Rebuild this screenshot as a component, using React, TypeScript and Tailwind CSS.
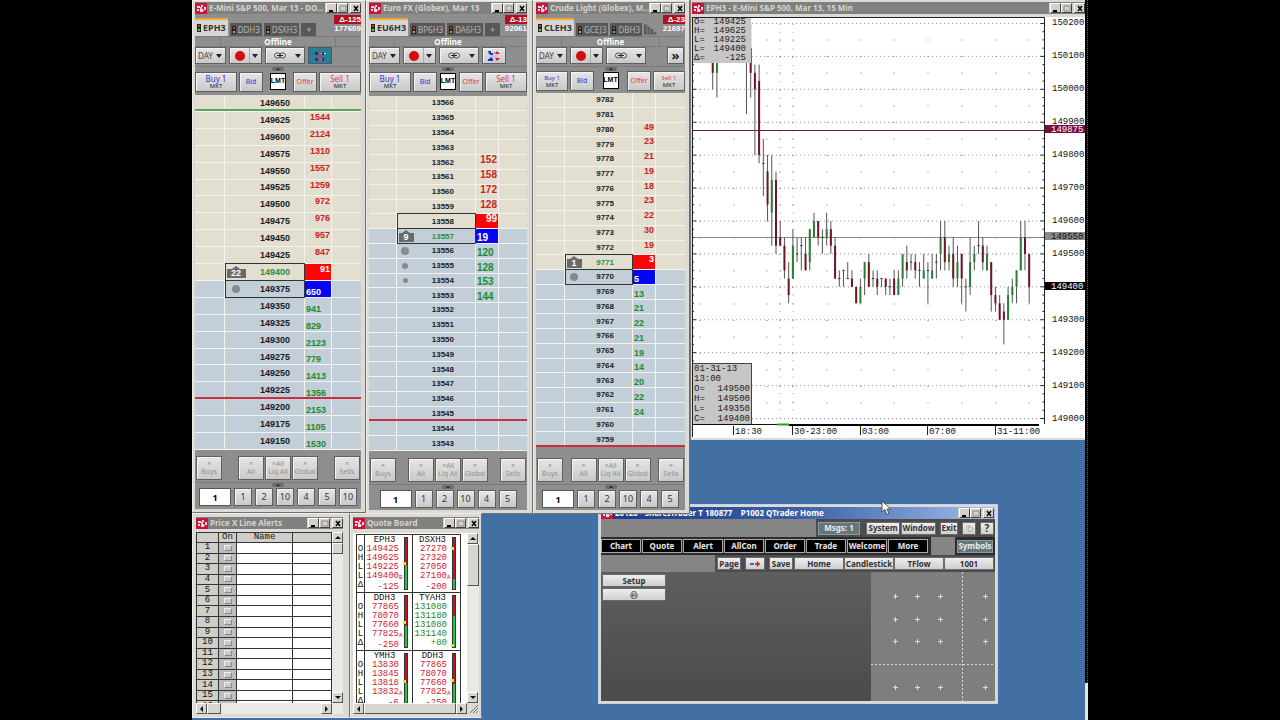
import React from "react";
import { Printer, Copy } from "lucide-react";

type Candle = [high: number, low: number, open: number, close: number];

type Side = "ask" | "bid";

interface LadderRow {
  price: string;
  qty?: string;
  marker?: "count" | "big" | "medium" | "small";
  count?: string;
  boxed?: boolean;
  last?: boolean;
  side: Side;
}

interface LadderProps {
  title: string;
  place: string;
  tabs: string[];
  extraTab: "plus" | "fade";
  change: string;
  volume: string;
  tool: "grid" | "arrows" | "more";
  narrow?: boolean;
  orderRow: string;
  cols: string;
  pricePad: string;
  priceText: string;
  qtyText: string;
  bodyHeight: string;
  footer: string;
  rows: LadderRow[];
  highLine?: string;
  lowLine: string;
  sizes: string[];
}

const uiFont = "font-['Noto_Sans','Open_Sans',sans-serif]";
const dataFont = "font-['Liberation_Sans',Arial,sans-serif]";
const monoFont = "font-['Liberation_Mono','Courier_New',monospace]";

const face = "border border-[#5f5f5f] bg-linear-to-b from-[#e6e6e6] to-[#c9c9c9] shadow-[inset_1px_1px_0_#f4f4f4]";

function Logo() {
  return (
    <svg viewBox="0 0 12 11" className="h-[11px] w-3 shrink-0">
      <rect width="12" height="11" fill="#c9143c" />
      <path d="M2 3h3v2H2zM6 2h2v2H6zM2 6h2v2H2zM5 6h3v3H5zM9 4h2v3H9z" fill="#fff" opacity="0.85" />
      <path d="M5 4h2v2H5zM8 7h1v1H8z" fill="#ffb8c4" />
    </svg>
  );
}

function CaptionButtons() {
  const cls = "flex h-[10px] w-[11px] items-center justify-center border border-t-white border-l-white border-r-[#404040] border-b-[#404040] bg-[#d4d0c8]";
  return (
    <div className="flex shrink-0 bg-[#d4d0c8] pl-px">
      <button className={cls} aria-label="Minimize">
        <svg viewBox="0 0 8 7" className="h-[7px] w-2"><path d="M1 6h4" stroke="#000" strokeWidth="2" /></svg>
      </button>
      <button className={cls} aria-label="Maximize">
        <svg viewBox="0 0 8 7" className="h-[7px] w-2"><path d="M1 1h6v5H1z" fill="none" stroke="#8b8b86" /></svg>
      </button>
      <button className={cls + " ml-0.5"} aria-label="Close">
        <svg viewBox="0 0 8 7" className="h-[7px] w-2"><path d="M2 1l4 5M6 1L2 6" stroke="#000" strokeWidth="1.4" /></svg>
      </button>
    </div>
  );
}

function TitleBar({ title, active = false }: { title: string; active?: boolean }) {
  return (
    <header
      className={
        active
          ? "flex h-3 items-center bg-linear-to-r from-[#1c3a86] via-[#3a5fa8] to-[#a3c0ea] pr-px text-white"
          : "flex h-3 items-center bg-[#808080] text-[#d6d3cc]"
      }
    >
      <Logo />
      <h2 className="min-w-0 flex-1 pl-0.5 text-[8px] leading-3 font-bold whitespace-pre">{title}</h2>
      <CaptionButtons />
    </header>
  );
}

function Light({ on }: { on: boolean }) {
  return (
    <svg viewBox="0 0 4 8" className="h-2 w-1 shrink-0">
      <rect width="4" height="8" fill="#1d1d1d" />
      <circle cx="2" cy="2" r="1.3" fill="#d62b2b" />
      <circle cx="2" cy="6" r="1.3" fill={on ? "#3ed43e" : "#c9a23a"} />
    </svg>
  );
}

function Caret() {
  return (
    <svg viewBox="0 0 6 4" className="h-1 w-1.5 shrink-0"><path d="M0 0h6L3 4z" fill="#222" /></svg>
  );
}

function Grip() {
  return (
    <div className="flex h-1 items-center justify-center border-t border-[#7a7a7a]">
      <svg viewBox="0 0 12 4" className="h-1 w-3"><rect width="12" height="4" rx="2" fill="#6b6b6b" /><path d="M4 3l2-2 2 2z" fill="#222" /></svg>
    </div>
  );
}

function Marker({ row }: { row: LadderRow }) {
  if (row.marker === "count") {
    return (
      <span className={"relative mt-[3px] flex h-[9px] items-center justify-center bg-[#6a6a6a] px-0.5 text-[9px] leading-[9px] text-white " + (row.count!.length > 1 ? "min-w-[19px]" : "min-w-[15px]")}>
        <svg viewBox="0 0 8 3" className="absolute -top-[3px] h-[3px] w-2"><path d="M0 3l4-3 4 3z" fill="#6a6a6a" /></svg>
        {row.count}
      </span>
    );
  }
  if (row.marker === "big") return <span className="size-2 rounded-full bg-[#8a8a8a]" />;
  if (row.marker === "medium") return <span className="size-1.5 rounded-full bg-[#8a8a8a]" />;
  if (row.marker === "small") return <span className="size-[5px] rounded-full bg-[#8a8a8a]" />;
  return null;
}

function qtyClass(row: LadderRow) {
  if (row.boxed && row.side === "ask") return "items-start justify-end bg-[#fb0505] text-white";
  if (row.boxed) return "items-end justify-start bg-[#0505f5] text-white";
  if (row.side === "ask") return "items-start justify-end text-[#cc2222]";
  return "items-end justify-start text-[#1d8a2b]";
}

function LadderWindow(p: LadderProps) {
  return (
    <section className={"absolute flex flex-col border border-[#efede8] border-r-[#707070] border-b-[#707070] bg-[#dcdad5] pt-px pb-[3px] pl-0.5 " + p.place}>
      <TitleBar title={p.title} />
      <div className="flex flex-col bg-[#8e8e8e]">
        <div className="mt-px flex h-[21px] items-end gap-0.5">
          {p.tabs.map((tab, i) => (
            <button
              key={tab}
              className={
                i === 0
                  ? "flex h-[18px] items-center gap-0.5 border-t-2 border-[#f0a830] bg-[#d6d6d6] px-0.5 text-[9px] font-bold text-[#333]"
                  : "flex h-[13px] items-center gap-0.5 bg-[#585858] px-0.5 text-[8px] text-[#b5b5b5]"
              }
            >
              <Light on={i !== 1} />
              {tab}
            </button>
          ))}
          {p.extraTab === "plus" ? (
            <button className="h-[13px] w-[15px] bg-[#585858] text-[9px] leading-3 text-[#c4c4c4]">+</button>
          ) : (
            <svg viewBox="0 0 18 13" className="h-[13px] w-[14px]"><path d="M0 0h4v3h4v3h4v4h4v3H0z" fill="#5c5c5c" /><path d="M4 2v11M8 5v8M12 8v5" stroke="#858585" /></svg>
          )}
          <div className={"ml-auto self-start text-right text-[8px] leading-[9px] font-bold text-white " + dataFont}>
            <div className="bg-[#b01020]">{p.change}</div>
            <div>{p.volume}</div>
          </div>
        </div>
        <div className="flex h-[11px] border-y border-[#7c7c7c]">
          <span className="w-[26px] border-r border-[#7c7c7c]" />
          <span className="flex-1 text-center text-[8px] leading-[9px] font-bold text-white">Offline</span>
          <span className="w-[26px] border-l border-[#7c7c7c]" />
        </div>
        <div className="flex gap-[3px] pr-px">
          <button className={"flex h-[17px] w-[31px] items-center justify-between pr-[3px] pl-0.5 text-[8px] text-[#444] " + face}>DAY <Caret /></button>
          <button className={"flex h-[17px] w-[33px] items-center justify-between pr-[3px] pl-[5px] " + face} aria-label="Record">
            <span className="size-2.5 rounded-full bg-[#d40c0c]" /><span className="-mr-px h-full border-l border-[#aaa]" /><Caret />
          </button>
          <button className={"flex h-[17px] w-10 items-center justify-between pr-[3px] pl-2 " + face} aria-label="Link">
            <svg viewBox="0 0 12 7" className="h-[7px] w-3">
              <g fill="none" stroke="#555"><rect x="0.5" y="1" width="6" height="5" rx="2.5" /><rect x="5.5" y="1" width="6" height="5" rx="2.5" /></g>
              <path d="M3 3.5h6" stroke="#222" />
            </svg>
            <Caret />
          </button>
          {p.tool === "grid" && (
            <button className="flex h-[17px] w-6 items-center justify-center border border-[#3f5f66] bg-[#2c7f93]" aria-label="Layout">
              <svg viewBox="0 0 14 12" className="h-3 w-3.5">
                <path d="M2 2h3v3H2zM2 8h3v3H2zM9 2h2v3H9zM9 8h2v3H9z" fill="#1532b8" />
                <path d="M5 2h3v3H5zM5 8h3v3H5z" fill="#d43c4a" />
                <path d="M8 3h1v1H8zM11 3h2v1h-2zM8 9h1v1H8z" fill="#dbe9ef" />
              </svg>
            </button>
          )}
          {p.tool === "arrows" && (
            <button className={"flex h-[17px] w-6 items-center justify-center " + face} aria-label="Center">
              <svg viewBox="0 0 12 12" className="size-3">
                <path d="M0 1h3v2h2v2H3L1 4zM0 11V9h1l2-2 2 2v2z" fill="#1a34c8" />
                <path d="M7 4l2-3 3 3zM7 8h5l-3 3zM6 2h1v1H6z" fill="#d02030" />
                <path d="M3 5h7v2H3z" fill="#c4c4d0" />
              </svg>
            </button>
          )}
          {p.tool === "more" && (
            <button className={"ml-auto h-[17px] w-[17px] text-[13px] leading-[13px] font-bold text-[#222] " + face}>»</button>
          )}
        </div>
        <div className="pt-0.5"><Grip /></div>
        <div className={"flex gap-0.5 " + p.orderRow}>
          <button className={(p.narrow ? "h-5 w-8 " : "h-5 w-[42px] ") + "leading-[8px] text-[#3434d8] " + face}>
            Buy 1<div className="text-[6px] leading-[6px] text-[#222]">MKT</div>
          </button>
          <button className={"h-5 w-6 text-[7px] text-[#3434d8] " + face}>Bid</button>
          <button className="mx-auto my-px flex h-[17px] w-4 items-center justify-center border border-black bg-white text-[7px] font-bold text-black">
            <span className="font-['Liberation_Sans',Arial,sans-serif]">LMT</span>
          </button>
          <button className={"flex h-5 w-6 items-center justify-center text-[7px] text-[#e03c44] " + face}>Offer</button>
          <button className={(p.narrow ? "h-5 w-8 " : "h-5 w-[42px] ") + "leading-[8px] text-[#e03c44] " + face}>
            Sell 1<div className="text-[6px] leading-[6px] text-[#222]">MKT</div>
          </button>
        </div>
      </div>

      <div className={"relative grid auto-rows-fr font-bold " + dataFont + " " + p.bodyHeight}>
        {p.rows.map((row) => (
          <div
            key={row.price}
            className={"grid min-h-0 border-b border-[#f3f2ec] " + p.cols + (row.side === "ask" ? " bg-[#e3dfd0]" : " bg-[#c2ced8]")}
          >
            <span className="border-r border-[#f3f2ec]" />
            <span
              className={
                "flex min-h-0 items-center justify-between border-r " +
                p.pricePad + " " + p.priceText +
                (row.boxed ? " -my-px border border-[#333]" : " border-[#f3f2ec]")
              }
            >
              <span className="flex w-4 justify-center"><Marker row={row} /></span>
              <span className={row.last ? "text-[#2e8f2e]" : "text-[#1c1c1c]"}>{row.price}</span>
            </span>
            <span className={"flex min-h-0 border-r border-[#f3f2ec] px-px " + p.qtyText + " " + qtyClass(row)}>{row.qty}</span>
            <span />
          </div>
        ))}
        {p.highLine && <div className={"absolute inset-x-0 h-0.5 bg-[#5aa65c] " + p.highLine} />}
        <div className={"absolute inset-x-0 h-0.5 bg-[#cc3040] " + p.lowLine} />
      </div>

      <div className={"flex flex-1 flex-col bg-[#8e8e8e] " + p.footer}>
        <div className="flex justify-between px-px text-[7px] leading-[8px] text-[#909090]">
          <button className={"h-6 w-[26px] " + face}><div>×</div>Buys</button>
          <div className="flex gap-px">
            <button className={"h-6 w-[26px] " + face}><div>×</div>All</button>
            <button className={"h-6 w-[26px] " + face}><div>×All</div>Liq All</button>
            <button className={"h-6 w-[26px] " + face}><div>×</div><span className="flex justify-center">Global</span></button>
          </div>
          <button className={"h-6 w-[26px] " + face}><div>×</div>Sells</button>
        </div>
        <div className="py-0.5"><Grip /></div>
        <div className="flex justify-center gap-[3px] text-[9px] text-[#333]">
          <input
            aria-label="Order size"
            defaultValue="1"
            className="h-[18px] w-8 border border-[#555] bg-white text-center font-bold text-black"
          />
          {p.sizes.map((size, i) => (
            <button key={i} className={"flex h-[18px] w-[18px] items-center justify-center " + face}>{size}</button>
          ))}
        </div>
      </div>
    </section>
  );
}

// Builds rows counting down from `top`; quantities run downwards from row `firstQty`.
function buildRows(
  top: number,
  step: number,
  count: number,
  lowestAsk: number,
  firstQty: number,
  qtys: string[],
  lastPrice: number,
  extra: Record<number, Partial<LadderRow>>
): LadderRow[] {
  return Array.from({ length: count }, (_, i) => {
    const price = top - i * step;
    const side: Side = price >= lowestAsk ? "ask" : "bid";
    return { price: String(price), qty: qtys[i - firstQty], side, last: price === lastPrice, ...extra[price] };
  });
}

const esRows = buildRows(
  149650, 25, 21, 149400, 1,
  ["1544", "2124", "1310", "1557", "1259", "972", "976", "957", "847", "91", "650", "941", "829", "2123", "779", "1413", "1356", "2153", "1105", "1530"],
  149400,
  { 149400: { marker: "count", count: "22", boxed: true }, 149375: { marker: "big", boxed: true } }
);

const euroRows = buildRows(
  13566, 1, 24, 13558, 4,
  ["152", "158", "172", "128", "99", "19", "120", "128", "153", "144"],
  13557,
  {
    13558: { boxed: true },
    13557: { marker: "count", count: "9", boxed: true },
    13556: { marker: "big" },
    13555: { marker: "medium" },
    13554: { marker: "small" },
  }
);

const crudeRows = buildRows(
  9782, 1, 24, 9771, 2,
  ["49", "23", "21", "19", "18", "23", "22", "30", "19", "3", "5", "13", "21", "22", "21", "19", "14", "20", "22", "24"],
  9771,
  { 9771: { marker: "count", count: "1", boxed: true }, 9770: { marker: "big", boxed: true } }
);

// Prices in quarter-point ticks above 149000.
const candles: (Candle | null)[] = [
  [46, 40, 45, 42], [46, 39, 42, 45], null, null, null, null, null, null,
  [46, 37, 45, 45], [48, 39, 45, 42], [43, 32, 42, 40], [43, 31, 41, 32], [34, 27, 31, 31],
  [32, 24, 30, 26], [32, 21, 25, 29], [30, 20, 29, 21], [24, 21, 22, 21], [22, 17, 21, 18],
  [19, 14, 17, 15], [23, 17, 17, 21], [22, 19, 20, 20], [22, 18, 21, 21], [22, 18, 20, 18],
  [23, 18, 19, 23], [25, 22, 22, 24], [24, 21, 24, 22], [23, 20, 22, 22], [25, 21, 22, 23],
  [24, 20, 23, 21], [22, 17, 21, 17], [18, 16, 17, 17], [18, 16, 18, 18], [19, 17, 17, 17],
  [18, 16, 17, 16], [16, 14, 16, 14], [17, 14, 14, 16], [19, 15, 17, 19], [20, 16, 19, 16],
  [18, 16, 17, 17], [18, 15, 17, 16], [17, 16, 17, 17], [17, 15, 17, 16], [17, 15, 16, 16],
  [18, 15, 17, 15], [18, 15, 15, 17], [20, 16, 17, 20], [21, 17, 19, 18], [20, 18, 19, 19],
  [20, 17, 19, 18], [19, 16, 18, 18], [20, 17, 17, 18], [19, 14, 18, 18], [20, 17, 17, 18],
  [20, 17, 19, 19], [24, 18, 20, 22], [24, 18, 22, 19], [21, 18, 19, 20], [22, 16, 20, 17],
  [21, 16, 17, 19], [20, 14, 20, 17], [17, 13, 16, 16], [22, 15, 16, 19], [21, 18, 19, 20],
  [24, 20, 21, 21], [22, 18, 21, 19], [21, 18, 18, 20], [19, 13, 19, 15], [16, 13, 15, 14],
  [15, 12, 14, 12], [14, 9, 13, 12], [16, 12, 12, 15], [17, 14, 15, 16], [18, 14, 16, 18],
  [24, 18, 18, 22], [24, 18, 22, 20], [20, 14, 20, 16],
];

const tickY = (t: number) => 418.5 - t * 8.23;
const barX = (i: number) => 712.7 + i * 4.22;

const priceLabels = Array.from({ length: 13 }, (_, i) => 150200 - i * 100);
const gridColumns = [700, 734, 767, 780, 793, 827, 861, 894, 928, 962, 996, 1029];
const timeLabels: [number, string][] = [[733, "18:30"], [792, "30-23:00"], [860, "03:00"], [927, "07:00"], [995, "31-11:00"]];

function OhlcBox({ cls, lines }: { cls: string; lines: [string, string][] }) {
  return (
    <div className={"absolute bg-[#c6c6c6] pl-px text-[9px] text-[#222] " + cls}>
      {lines.map(([a, b], i) => (
        <div key={i} className="flex justify-between whitespace-pre"><span>{a}</span><span>{b}</span></div>
      ))}
    </div>
  );
}

function ChartWindow() {
  return (
    <section className="absolute top-0 left-[498px] w-[395px] border-l border-[#777] bg-[#dcdad5] pt-0.5 pb-0.5 pl-px">
      <TitleBar title="EPH3 - E-Mini S&P 500, Mar 13, 15 Min" />
      <div className={"relative mt-[3px] bg-white " + monoFont}>
        <svg viewBox="692 17 393 421" className="block w-full">
          <g stroke="#9a9a9a" fill="none">
            {priceLabels.map((p, i) => (
              <path key={p} d={`M692 ${tickY(48 - i * 4)}H1044`} strokeDasharray="1 3" />
            ))}
            {gridColumns.map((x) => (
              <path key={x} d={`M${x} 39.5V418`} strokeDasharray="1 15.5" stroke="#777" />
            ))}
            {[780, 793].map((x) => (
              <path key={x} d={`M${x} 24V418`} strokeDasharray="1 7.2" />
            ))}
          </g>
          <path d="M692 130.5H1044" stroke="#6b2036" />
          <path d="M692 237.5H1044" stroke="#8c8c8c" />
          {candles.map((c, i) => {
            if (!c) return null;
            const [high, low, open, close] = c;
            const x = barX(i);
            const top = tickY(Math.max(open, close));
            const size = Math.abs(open - close) * 8.23;
            return (
              <g key={i}>
                <path d={`M${x} ${tickY(high)}V${tickY(low)}`} stroke="#555" />
                {size === 0 ? (
                  <path d={`M${x - 1.2} ${top}h2.4`} stroke="#333" />
                ) : (
                  <rect x={x - 1} y={top} width="2" height={size} fill={close > open ? "#2c7d36" : "#6f1522"} />
                )}
              </g>
            );
          })}
          <g stroke="#222">
            {Array.from({ length: 49 }, (_, i) => (
              <path key={i} d={`M${i % 4 ? 1042.5 : 1040.5} ${tickY(i)}H1044M692 ${tickY(i)}h${i % 4 ? 2 : 4}`} />
            ))}
            <path d="M1044.5 17V424M692 17.5H1044.5M692.5 17V437" fill="none" />
          </g>
          <path d="M692 424.5H777" stroke="#111" />
          <path d="M777 424.5H789" stroke="#25a030" strokeWidth="2" />
          <path d="M789 425H1039" stroke="#000" strokeWidth="2" />
          <g fill="#111" fontSize="9">
            {priceLabels.map((p, i) => (
              <text key={p} x="1052" y={Math.round(tickY(48 - i * 4)) + 2}>{p}</text>
            ))}
            {timeLabels.map(([x, label]) => (
              <g key={label}>
                <path d={`M${x}.5 426v9`} stroke="#222" />
                <text x={x + 2} y="434">{label}</text>
              </g>
            ))}
            <rect x="1045" y="125" width="40" height="8" fill="#7a0a40" />
            <text x="1051" y="132" fill="#fff">149875</text>
            <rect x="1045" y="232" width="40" height="8" fill="#8a8a8a" />
            <text x="1051" y="239" fill="#111">149550</text>
            <rect x="1045" y="282" width="40" height="8" fill="#000" />
            <text x="1051" y="289" fill="#fff">149400</text>
          </g>
        </svg>
        <OhlcBox
          cls="top-px left-px w-[58px] pr-[5px] leading-[9px]"
          lines={[["O=", "149425"], ["H=", "149625"], ["L=", "149225"], ["L=", "149400"], ["Δ=", "-125"]]}
        />
        <OhlcBox
          cls="bottom-[14px] left-px w-[59px] border-t border-r border-[#444] pr-px leading-[10px]"
          lines={[["01-31-13", ""], ["13:00", ""], ["O=", "149500"], ["H=", "149500"], ["L=", "149350"], ["C=", "149400"]]}
        />
      </div>
    </section>
  );
}

const bevel = "flex items-center justify-center border border-t-white border-l-white border-r-[#555] border-b-[#555] bg-[#d8d5ce]";

function Arrow({ dir, label }: { dir: "up" | "down" | "left" | "right"; label: string }) {
  const paths = { up: "M1 5h6L4 2z", down: "M1 2h6L4 5z", left: "M5 1v6L2 4z", right: "M2 1v6l3-3z" };
  return (
    <button className={"size-[11px] shrink-0 " + bevel} aria-label={label}>
      <svg viewBox="0 0 8 8" className="size-2"><path d={paths[dir]} fill="#111" /></svg>
    </button>
  );
}

function AlertsWindow() {
  return (
    <section className="absolute top-[513px] left-0 flex h-[205px] w-[158px] flex-col border border-[#efede8] border-r-[#707070] bg-[#dcdad5] pt-[3px] pr-1.5 pb-[3px] pl-[3px]">
      <TitleBar title="Price X Line Alerts" />
      <div className="mt-[3px] flex min-h-0 flex-1">
        <div className={"min-w-0 flex-1 overflow-hidden text-[9px] leading-[9px] text-[#111] " + monoFont}>
          <table className="h-[180px] w-full table-fixed border-collapse">
            <thead>
              <tr className="bg-[#d0cec9]">
                <th className="w-[22px] border border-[#333] p-0" />
                <th className="w-[18px] border border-[#333] p-0 font-normal">On</th>
                <th className="w-[56px] border border-[#333] p-0 font-normal">Name</th>
                <th className="border border-[#333] p-0" />
              </tr>
            </thead>
            <tbody>
              {Array.from({ length: 16 }, (_, i) => (
                <tr key={i} className="bg-white">
                  <th className="border border-[#333] bg-[#d0cec9] p-0 font-normal">{i + 1}</th>
                  <td className="border border-[#333] bg-[#bdbdbd] p-0">
                    <button
                      aria-label={`Alert ${i + 1}`}
                      className="mx-auto block h-[6px] w-2 border border-t-[#eee] border-l-[#eee] border-r-[#888] border-b-[#888] bg-[#c9c9c9]"
                    />
                  </td>
                  <td className="border border-[#333] p-0" />
                  <td className="border border-[#333] p-0" />
                </tr>
              ))}
            </tbody>
          </table>
        </div>
        <div className="flex w-[11px] flex-col bg-[#ebe9e5]">
          <Arrow dir="up" label="Scroll up" />
          <div className={"h-[11px] " + bevel} />
          <div className="flex-1" />
          <Arrow dir="down" label="Scroll down" />
        </div>
      </div>
      <div className="flex bg-[#ebe9e5] pr-[11px]">
        <Arrow dir="left" label="Scroll left" />
        <div className={"w-[14px] " + bevel} />
        <div className="flex-1" />
        <Arrow dir="right" label="Scroll right" />
      </div>
    </section>
  );
}

interface Quote {
  symbol: string;
  values: string[];
  suffix?: string;
  up?: boolean;
  split: number;
  mark: number;
}

const quotes: Quote[] = [
  { symbol: "EPH3", values: ["149425", "149625", "149225", "149400", "-125"], suffix: "B", split: 52, mark: 50 },
  { symbol: "DSXH3", values: ["27270", "27320", "27050", "27100", "-200"], suffix: "A", split: 80, mark: 20 },
  { symbol: "DDH3", values: ["77865", "78070", "77660", "77825", "-250"], suffix: "A", split: 58, mark: 52 },
  { symbol: "TYAH3", values: ["131080", "131180", "131080", "131140", "+80"], up: true, split: 40, mark: 98 },
  { symbol: "YMH3", values: ["13830", "13845", "13818", "13832", "-6"], suffix: "A", split: 56, mark: 54 },
  { symbol: "DDH3", values: ["77865", "78070", "77660", "77825", "-250"], suffix: "A", split: 58, mark: 52 },
];

function QuoteCell({ quote }: { quote: Quote }) {
  return (
    <div className="flex border-r border-[#333] pt-px">
      <div className="min-w-0 flex-1">
        <div className="text-center text-[#111]">{quote.symbol}</div>
        <div className={quote.up ? "text-[#1f8632]" : "text-[#d01c30]"}>
          {quote.values.map((v, i) => (
            <div key={i} className="flex justify-end">
              {v}
              <span className="w-[5px] text-[6px] leading-[11px]">{i === 3 ? quote.suffix : ""}</span>
            </div>
          ))}
        </div>
      </div>
      <div className="relative mt-px mr-1 mb-0.5 w-1 border border-[#333] bg-[#20c83c]">
        <div className="bg-[#c4141c]" style={{ height: `${quote.split}%` }} />
        <div className="absolute -left-0.5 size-[3px] bg-[#e8e020]" style={{ top: `${quote.mark - 3}%` }} />
      </div>
    </div>
  );
}

function QuoteBoard() {
  return (
    <section className="absolute top-[513px] left-[158px] flex h-[205px] w-[132px] flex-col border border-[#efede8] border-r-[#707070] bg-[#dcdad5] px-[2px] pt-[3px] pb-[3px]">
      <TitleBar title="Quote Board" />
      <div className="mt-1 flex min-h-0 flex-1">
        <div className="min-w-0 flex-1 overflow-hidden bg-white pt-px pr-1.5 pl-[3px]">
          <div className={"border-t border-l border-[#333] text-[9px] leading-[9px] " + monoFont}>
            {[0, 2, 4].map((start) => (
              <div key={start} className="grid h-[58px] grid-cols-[8px_1fr_1fr] border-b border-[#333]">
                <div className="border-r border-[#333] pt-2.5 text-center text-[#111]">
                  {["O", "H", "L", "L", "Δ"].map((l, i) => <div key={i}>{l}</div>)}
                </div>
                <QuoteCell quote={quotes[start]} />
                <QuoteCell quote={quotes[start + 1]} />
              </div>
            ))}
          </div>
        </div>
        <div className="flex w-3 flex-col bg-[#ebe9e5]">
          <Arrow dir="up" label="Scroll up" />
          <div className={"h-[42px] " + bevel} />
          <div className="flex-1" />
          <Arrow dir="down" label="Scroll down" />
        </div>
      </div>
      <div className="flex">
        <Arrow dir="left" label="Scroll left" />
        <div className={"flex-1 " + bevel} />
        <Arrow dir="right" label="Scroll right" />
        <svg viewBox="0 0 12 11" className="h-[11px] w-3"><path d="M3 10l8-8M6 10l5-5M9 10l2-2" stroke="#777" /></svg>
      </div>
    </section>
  );
}

const menu = ["Chart", "Quote", "Alert", "AllCon", "Order", "Trade", "Welcome", "More"];

function HomeWindow() {
  const light = "flex h-[13px] items-center justify-center border border-[#6a6a6a] bg-linear-to-b from-[#eeeeee] to-[#cfcfcf] text-[#333]";
  return (
    <section className="absolute top-[504px] left-[406px] flex h-[200px] w-[400px] flex-col border border-[#c9d2dd] bg-[#dcdad5] p-0.5 text-[8px] font-bold">
      <TitleBar title="20120 - ShareITrader T 180877    P1002 QTrader Home" active />
      <div className="flex h-[18px] items-center bg-[#4c4c4c] pr-px">
        <div className="h-full flex-1 bg-[#858585]" />
        <button className="ml-0.5 flex h-[13px] w-[42px] items-center justify-center border border-[#8a9a9e] bg-[#64787c] text-[#e8eef0]">Msgs: 1</button>
        <button className={"ml-[6px] w-[34px] " + light}>System</button>
        <button className={"ml-px w-[35px] " + light}>Window</button>
        <button className={"ml-1 w-[18px] " + light}>Exit</button>
        <button className={"ml-1 w-[14px] " + light} aria-label="Cascade"><Copy className="size-[7px] text-[#999]" /></button>
        <button className={"ml-1 w-[14px] text-[10px] " + light}>?</button>
      </div>
      <div className="flex h-[18px] items-center bg-[#2c2c2c] pr-0.5">
        <nav className="flex flex-1 gap-px">
          {menu.map((item) => (
            <button key={item} className="flex h-[14px] w-10 items-center justify-center border border-[#a8a8a8] bg-black text-[#e8e8e8]">
              {item}
            </button>
          ))}
        </nav>
        <div className="mr-0.5 h-full w-6 bg-[#858585]" />
        <button className="flex h-[13px] w-[36px] items-center justify-center border border-[#8a9a9e] bg-[#64787c] text-[#e8eef0]">Symbols</button>
      </div>
      <div className="flex h-[17px] items-center bg-[#4c4c4c] pr-px">
        <div className="h-full flex-1 bg-[#858585]" />
        <button className={"ml-0.5 w-6 " + light}>Page</button>
        <button className={"ml-1 w-5 " + light} aria-label="Zoom">
          <svg viewBox="0 0 12 6" className="h-1.5 w-3"><path d="M1 3h4" stroke="#1a2cc8" strokeWidth="1.5" /><path d="M6 3h5M8.5 .5v5" stroke="#c8142c" strokeWidth="1.5" /></svg>
        </button>
        <button className={"ml-1 w-6 " + light}>Save</button>
        <button className={"ml-px w-[50px] " + light}>Home</button>
        <button className={"w-[50px] " + light}>Candlestick</button>
        <button className={"w-[50px] " + light}>TFlow</button>
        <button className={"w-[50px] " + light}>1001</button>
      </div>
      <div className="flex min-h-0 flex-1">
        <div className="flex-1 bg-linear-to-b from-[#5e5e5e] to-[#4b4b4b] pt-0.5 pl-px">
          <button className={"w-16 " + light}>Setup</button>
          <button className={"mt-px w-16 " + light} aria-label="Print"><Printer className="size-2" /></button>
        </div>
        <svg viewBox="871 572 124 129" preserveAspectRatio="xMinYMin slice" className="h-full w-[124px] bg-[#7e7e7e]">
          <path d="M962.5 572V702M871 664.5H995" stroke="#d8d8d8" strokeDasharray="2 2" />
          {[596, 619, 641, 687].map((y) =>
            [895, 917, 940, 985].map((x) => <path key={`${x}-${y}`} d={`M${x - 2} ${y}.5h5M${x}.5 ${y - 2}v5`} stroke="#dcdcdc" />)
          )}
        </svg>
      </div>
    </section>
  );
}

export default function App() {
  return (
    <div className={"flex h-screen min-h-[720px] justify-center bg-black " + uiFont}>
      <main className="relative flex w-full max-w-[896px] overflow-hidden">
        <div className="flex-1 bg-[#4270a4]" />
        <div className="flex w-[3px] flex-col">
          <div className="flex-1 border-r border-dotted border-[#666]" />
          <div className="h-[37px] bg-[#e4e4e4]" />
        </div>

        <HomeWindow />
        <ChartWindow />
        <LadderWindow
          title="E-Mini S&P 500, Mar 13 - DO..."
          place="top-0 left-0 h-[513px] w-[174px] pr-1"
          tabs={["EPH3", "DDH3", "DSXH3"]}
          extraTab="plus"
          change="Δ-125"
          volume="177609"
          tool="grid"
          orderRow="pt-0.5 pb-[3px] text-[8px]"
          cols="grid-cols-[30px_80px_27px_1fr]"
          pricePad="pr-[14px] pl-0.5"
          priceText="text-[9px] leading-[10px]"
          qtyText="text-[9px] leading-[10px]"
          bodyHeight="h-[355px]"
          footer="pt-[6px]"
          rows={esRows}
          highLine="top-[14px]"
          lowLine="top-[302px]"
          sizes={["1", "2", "10", "4", "5", "10"]}
        />
        <LadderWindow
          title="Euro FX (Globex), Mar 13"
          place="top-0 left-[174px] h-[514px] w-[167px] pr-[5px]"
          tabs={["EU6H3", "BP6H3", "DA6H3"]}
          extraTab="plus"
          change="Δ-13"
          volume="92061"
          tool="arrows"
          orderRow="pt-0.5 pb-1 text-[8px]"
          cols="grid-cols-[28px_79px_23px_1fr]"
          pricePad="pr-[21px]"
          priceText="text-[8px] leading-[9px]"
          qtyText="text-[10px] leading-[10px]"
          bodyHeight="h-[355px]"
          footer="pt-[7px]"
          rows={euroRows}
          lowLine="top-[323px]"
          sizes={["1", "2", "10", "4", "5"]}
        />
        <LadderWindow
          title="Crude Light (Globex), M..."
          place="top-0 left-[341px] h-[514px] w-[157px] pr-1"
          tabs={["CLEH3", "GCEJ3", "DBH3"]}
          extraTab="fade"
          change="Δ-23"
          volume="21697"
          tool="more"
          narrow
          orderRow="pt-px pb-0.5 text-[6px]"
          cols="grid-cols-[29px_68px_23px_1fr]"
          pricePad="pr-[18px]"
          priceText="text-[8px] leading-[9px]"
          qtyText="text-[9px] leading-[9px]"
          bodyHeight="h-[354px]"
          footer="pt-[11px]"
          rows={crudeRows}
          lowLine="bottom-0"
          sizes={["1", "2", "10", "4", "5"]}
        />
        <AlertsWindow />
        <QuoteBoard />

        <svg viewBox="0 0 10 16" className="absolute top-[500px] left-[689px] h-4 w-2.5">
          <path d="M1 1v11l3-2.5 2 5 2-1-2-4.5h3.5z" fill="#fff" stroke="#333" strokeWidth="0.8" />
        </svg>
      </main>
    </div>
  );
}
